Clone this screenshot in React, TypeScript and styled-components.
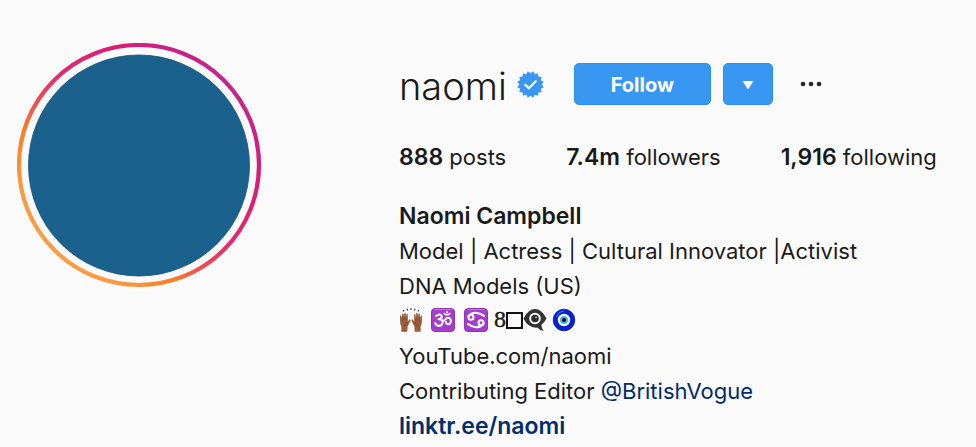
import React from "react";
import styled, { createGlobalStyle } from "styled-components";

const GlobalStyle = createGlobalStyle`
  *, *::before, *::after { box-sizing: border-box; }
  body {
    margin: 0;
    background: #fafafa;
    color: #1a1a1a;
    font-family: Inter, "Liberation Sans", sans-serif;
    font-size: 22px;
    line-height: 35px;
  }
`;

const Profile = styled.main`
  display: flex;
  align-items: flex-start;
  gap: 137px;
  padding: 43px 16px 0 17px;
`;

const StoryRing = styled.button`
  flex: none;
  width: 245px;
  padding: 0;
  border: 0;
  background: none;
  cursor: pointer;
  svg { display: block; width: 100%; }
`;

const Details = styled.section`
  flex: 1;
  min-width: 0;
  padding-top: 20px;
`;

const Header = styled.header`
  display: flex;
  align-items: center;
  height: 42px;
`;

const Username = styled.h1`
  margin: 0 10px 0 0;
  padding-top: 4px;
  font-size: 38px;
  line-height: 42px;
  font-weight: 300;
`;

const Badge = styled.svg`
  flex: none;
  width: 27px;
  height: 27px;
`;

const BlueButton = styled.button<{ $width: number; $gap: number }>`
  display: flex;
  align-items: center;
  justify-content: center;
  flex: none;
  width: ${(p) => p.$width}px;
  height: 42px;
  margin-left: ${(p) => p.$gap}px;
  padding: 2px 0 0;
  border: 1px solid #288ef0;
  border-radius: 5px;
  background: #3897f0;
  color: #fff;
  font: 700 20px/35px Inter, "Liberation Sans", sans-serif;
  cursor: pointer;
`;

const MoreButton = styled.button`
  display: flex;
  flex: none;
  margin-left: 26px;
  padding: 0;
  border: 0;
  background: none;
  cursor: pointer;
`;

const Stats = styled.ul`
  display: flex;
  gap: 60px;
  margin: 35px 0 24px;
  padding: 0;
  list-style: none;
  white-space: nowrap;
`;

const Strong = styled.strong`
  font-size: 23px;
  font-weight: 600;
`;

const Name = styled.h2`
  margin: 0;
  font-size: 23px;
  line-height: 35px;
  font-weight: 600;
`;

const BioLine = styled.p`
  margin: 0;
  height: 35px;
  white-space: nowrap;
`;

const EmojiLine = styled(BioLine)`
  display: flex;
  align-items: center;
  padding-bottom: 4px;
`;

const Emoji = styled.svg<{ $gap?: number }>`
  flex: none;
  width: 24px;
  height: 24px;
  margin-right: ${(p) => p.$gap ?? 0}px;
`;

const Eight = styled.span`
  font-family: "Liberation Serif", serif;
  font-size: 24px;
  -webkit-text-stroke: 0.4px #1a1a1a;
`;

const MissingGlyph = styled.span`
  width: 17px;
  height: 17px;
  margin-top: 2px;
  border: 2px solid #111;
`;

const Link = styled.a<{ $bold?: boolean }>`
  color: ${(p) => (p.$bold ? "#002f6c" : "#002b66")};
  font-size: ${(p) => (p.$bold ? 23 : 22)}px;
  font-weight: ${(p) => (p.$bold ? 600 : 400)};
  text-decoration: none;
`;

const stats = [
  { value: "888", label: "posts" },
  { value: "7.4m", label: "followers" },
  { value: "1,916", label: "following" },
];

const badgePoints = Array.from({ length: 32 }, (_, i) => {
  const radius = i % 2 ? 11.2 : 13.5;
  const angle = (i * Math.PI) / 16 + Math.PI / 16;
  return `${13.5 + radius * Math.cos(angle)},${13.5 + radius * Math.sin(angle)}`;
}).join(" ");

function Avatar() {
  return (
    <svg viewBox="0 0 245 245" aria-hidden="true">
      <defs>
        <linearGradient id="ring" x1="0.1" y1="0.9" x2="0.9" y2="0.1">
          <stop offset="0" stopColor="#fba04b" />
          <stop offset="0.14" stopColor="#fa9840" />
          <stop offset="0.29" stopColor="#f58029" />
          <stop offset="0.4" stopColor="#ed4b51" />
          <stop offset="0.54" stopColor="#df2b70" />
          <stop offset="0.76" stopColor="#d91b75" />
          <stop offset="0.92" stopColor="#c4248b" />
          <stop offset="1" stopColor="#c13091" />
        </linearGradient>
      </defs>
      <circle cx="122" cy="122" r="120" fill="none" stroke="url(#ring)" strokeWidth="4.2" />
      <circle cx="122" cy="122.5" r="110.5" fill="#1b618e" stroke="#15517a" strokeWidth="0.8" />
    </svg>
  );
}

function RaisedHands() {
  const hand = (
    <>
      <path d="M1 8.8Q.9 7.5 1.7 7.5T2.5 8.8L3 13 3 6.7Q3 5.5 3.8 5.5T4.7 6.7L5 12 5.2 5.9Q5.3 4.8 6.1 4.9T6.9 6L7 12 7.4 7Q7.5 6 8.2 6.1T8.9 7.1L8.8 14 9.7 12.3Q10.4 10.9 11.2 11.5 12 12 11.2 13.6L8.6 18.5 8.3 23.7H2.3L2.4 19Q.8 16 1 8.8Z" fill="#985d3a" />
      <path d="M3 13V9M5 12V8M7 12.5V9M4.5 18Q7.5 18 8.6 14" fill="none" stroke="#6f3c23" strokeWidth=".6" />
    </>
  );
  return (
    <Emoji viewBox="0 0 24 24" $gap={8} role="img" aria-label="Raised hands">
      {hand}
      <g transform="matrix(-1 0 0 1 24 0)">{hand}</g>
      <path d="M5.2 3.5 4 2M8.6 2.5 8 .8M12 2.1V.2M15.4 2.5 16 .8M18.8 3.5 20 2" stroke="#333" strokeWidth="1.2" fill="none" />
    </Emoji>
  );
}

function PurpleSign({ label, gap, children }: { label: string; gap: number; children: React.ReactNode }) {
  return (
    <Emoji viewBox="0 0 24 24" $gap={gap} role="img" aria-label={label}>
      <rect x=".5" y=".5" width="23" height="23" rx="3.5" fill="#a43dcb" stroke="#8d35ae" />
      <path d="M3.5 1.5H20.5" stroke="#cd70e6" strokeWidth="1" />
      <g fill="none" stroke="#fff" strokeWidth="2" strokeLinecap="round" strokeLinejoin="round">{children}</g>
    </Emoji>
  );
}

function WitnessEye() {
  return (
    <Emoji viewBox="0 0 24 24" $gap={5} role="img" aria-label="Eye in speech bubble">
      <path d="M.5 10.5Q5.2 1 12 1T23.5 10.5Q21.5 14.5 18.4 16.8Q18.3 20 20.7 23Q16.5 22.5 14.4 19.6Q5.2 20.5.5 10.5Z" fill="#333" />
      <circle cx="12" cy="10.5" r="5.8" fill="#fff" />
      <circle cx="12" cy="10.5" r="3.8" fill="#292929" />
      <circle cx="13.1" cy="9.3" r=".9" fill="#ccc" />
    </Emoji>
  );
}

export default function App() {
  return (
    <>
      <GlobalStyle />
      <Profile>
        <StoryRing type="button" aria-label="View naomi's story">
          <Avatar />
        </StoryRing>
        <Details>
          <Header>
            <Username>naomi</Username>
            <Badge viewBox="0 0 27 27" role="img" aria-label="Verified">
              <polygon points={badgePoints} fill="#3897f0" />
              <path d="m8.2 13.8 3.6 3.5 7-7" fill="none" stroke="#fff" strokeWidth="2.2" strokeLinecap="round" />
            </Badge>
            <BlueButton type="button" $width={137} $gap={30}>Follow</BlueButton>
            <BlueButton type="button" $width={50} $gap={12} aria-label="Suggested accounts">
              <svg width="12" height="9" viewBox="0 0 12 9" aria-hidden="true">
                <path d="M.5 0h11L6 8.5Z" fill="#fff" />
              </svg>
            </BlueButton>
            <MoreButton type="button" aria-label="Options">
              <svg width="24" height="6" viewBox="0 0 24 6" aria-hidden="true">
                <circle cx="4" cy="3" r="2.3" fill="#262626" />
                <circle cx="12" cy="3" r="2.3" fill="#262626" />
                <circle cx="20" cy="3" r="2.3" fill="#262626" />
              </svg>
            </MoreButton>
          </Header>
          <Stats>
            {stats.map((s) => (
              <li key={s.label}><Strong>{s.value}</Strong> {s.label}</li>
            ))}
          </Stats>
          <Name>Naomi Campbell</Name>
          <BioLine>Model | Actress | Cultural Innovator |Activist</BioLine>
          <BioLine>DNA Models (US)</BioLine>
          <EmojiLine>
            <RaisedHands />
            <PurpleSign label="Om" gap={9}>
              <path d="M5 8Q8 5.6 10 7.2C12.1 9 9.8 11.1 7.5 11.2 11.3 11 12.2 13 11.3 15.5 9.8 19.2 5.2 18.2 4.3 15M11.2 13.2C14.3 13.4 14.2 9.7 17 9.7 21 9.7 20.6 16.5 17 16.2 15.6 16.1 15 15 14.9 14" />
              <path d="M13 5.5Q16 8.2 19 5.5" strokeWidth="1.4" />
              <circle cx="16.1" cy="4.2" r=".5" strokeWidth="1.2" />
            </PurpleSign>
            <PurpleSign label="Cancer" gap={6}>
              <circle cx="7" cy="9.3" r="2.5" />
              <path d="M4.6 8.4Q7.5 4 13 5.1 17 5.6 20 8" />
              <circle cx="17" cy="14.7" r="2.5" />
              <path d="M19.4 15.6Q16.5 20 11 18.9 7 18.4 4 16" />
            </PurpleSign>
            <Eight>8</Eight>
            <MissingGlyph aria-hidden="true" />
            <WitnessEye />
            <Emoji viewBox="0 0 24 24" role="img" aria-label="Nazar amulet">
              <circle cx="12" cy="12" r="10.8" fill="#0922ce" stroke="#061a99" strokeWidth=".8" />
              <path d="M4.5 9Q6.5 3.5 12 3.2" stroke="#365cff" strokeWidth="1.2" fill="none" />
              <circle cx="12" cy="12" r="6.2" fill="#f5fcff" />
              <circle cx="12" cy="12" r="4" fill="#48b5e4" />
              <circle cx="12" cy="12" r="2" fill="#07111c" />
            </Emoji>
          </EmojiLine>
          <BioLine>YouTube.com/naomi</BioLine>
          <BioLine>Contributing Editor <Link href="#britishvogue">@BritishVogue</Link></BioLine>
          <BioLine><Link href="#linktree" $bold>linktr.ee/naomi</Link></BioLine>
        </Details>
      </Profile>
    </>
  );
}
